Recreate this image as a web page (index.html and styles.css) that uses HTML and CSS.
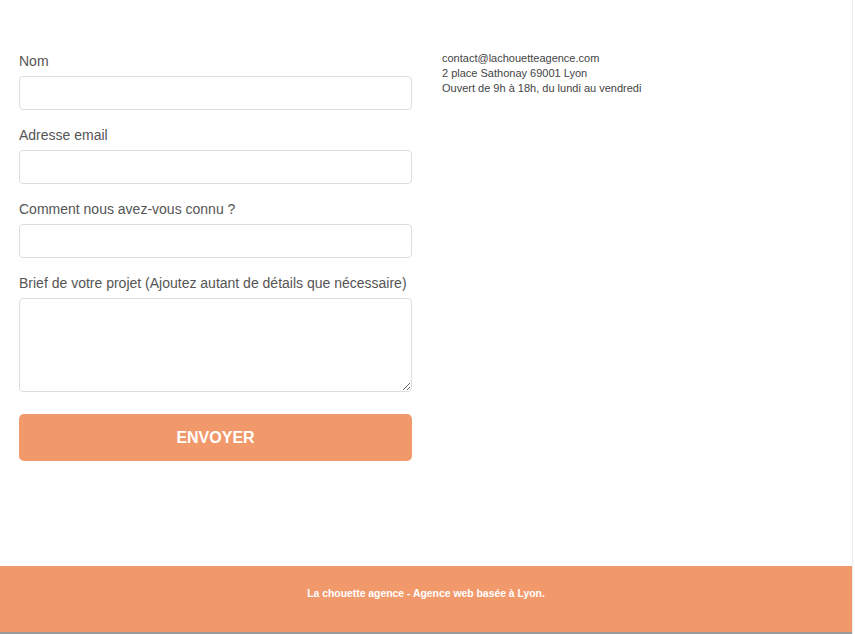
FILE: index.html
```html
<!DOCTYPE html>
<html lang="fr">
<head>
<meta charset="utf-8">
<title>Contact - La chouette agence</title>
<link rel="stylesheet" href="styles.css">
</head>
<body>
<div class="page">
  <main class="main">
    <form class="form">
      <div class="field">
        <label class="label" for="nom">Nom</label>
        <input class="input" id="nom" type="text">
      </div>
      <div class="field">
        <label class="label" for="email">Adresse email</label>
        <input class="input" id="email" type="email">
      </div>
      <div class="field">
        <label class="label" for="connu">Comment nous avez-vous connu ?</label>
        <input class="input" id="connu" type="text">
      </div>
      <div class="field">
        <label class="label" for="brief">Brief de votre projet (Ajoutez autant de détails que nécessaire)</label>
        <textarea class="textarea" id="brief"></textarea>
      </div>
      <button class="button" type="button">ENVOYER</button>
    </form>
    <div class="info">
      <p>contact@lachouetteagence.com</p>
      <p>2 place Sathonay 69001 Lyon</p>
      <p>Ouvert de 9h à 18h, du lundi au vendredi</p>
    </div>
  </main>
  <footer class="footer">
    <p>La chouette agence - Agence web basée à Lyon.</p>
  </footer>
  <div class="bottom-strip"></div>
</div>
</body>
</html>
```

FILE: styles.css
```css
* { box-sizing: border-box; }
html, body { margin: 0; padding: 0; background: #fff; }
body {
  font-family: "Liberation Sans", Arial, sans-serif;
  color: #555;
  overflow: hidden;
}
.page {
  width: 853px;
  border-right: 1px solid #ececec;
}
.main {
  height: 566px;
  padding: 51px 0 0 19px;
  display: flex;
  gap: 30px;
}
.form {
  width: 393px;
  display: flex;
  flex-direction: column;
}
.field {
  display: flex;
  flex-direction: column;
  margin-bottom: 15px;
}
.label {
  font-size: 14px;
  line-height: 20px;
  color: #555;
  margin-bottom: 5px;
}
.input, .textarea {
  width: 393px;
  height: 34px;
  border: 1px solid #ddd;
  border-radius: 4px;
  background: #fff;
  font-family: inherit;
  font-size: 14px;
  margin: 0;
  padding: 6px 10px;
  display: block;
}
.textarea {
  height: 94px;
  resize: vertical;
}
.field:last-of-type { margin-bottom: 22px; }
.button {
  width: 393px;
  height: 47px;
  border: none;
  border-radius: 5px;
  background: #f2996c;
  color: #fff;
  font-family: inherit;
  font-size: 16px;
  font-weight: bold;
  padding: 0;
}
.info {
  font-size: 11px;
  line-height: 15px;
  color: #444;
}
.info p { margin: 0; }
.footer {
  height: 66px;
  background: #f2996c;
  display: flex;
  align-items: center;
  justify-content: center;
  padding-bottom: 12px;
}
.footer p {
  margin: 0;
  color: #fff;
  font-size: 10.4px;
  font-weight: bold;
}
.bottom-strip {
  height: 2px;
  background: #9a9a9a;
}
```
